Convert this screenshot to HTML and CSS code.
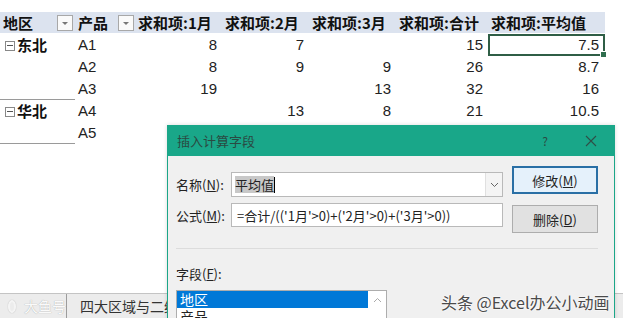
FILE: index.html
```html
<!doctype html>
<html>
<head>
<meta charset="utf-8">
<link rel="stylesheet" href="styles.css">
</head>
<body>
<div class="sheet">
	<div class="pivot">
		<div class="h first">地区<span class="filt"></span></div>
		<div class="h first">产品<span class="filt"></span></div>
		<div class="h">求和项:1月</div>
		<div class="h">求和项:2月</div>
		<div class="h">求和项:3月</div>
		<div class="h">求和项:合计</div>
		<div class="h">求和项:平均值</div>

		<div class="region r3"><span class="tog"></span>东北</div>
		<div class="p">A1</div><div class="n">8</div><div class="n">7</div><div class="n"></div><div class="n">15</div><div class="n cur">7.5<span class="handle"></span></div>
		<div class="p">A2</div><div class="n">8</div><div class="n">9</div><div class="n">9</div><div class="n">26</div><div class="n">8.7</div>
		<div class="p">A3</div><div class="n">19</div><div class="n"></div><div class="n">13</div><div class="n">32</div><div class="n">16</div>

		<div class="region r2"><span class="tog"></span>华北</div>
		<div class="p">A4</div><div class="n"></div><div class="n">13</div><div class="n">8</div><div class="n">21</div><div class="n">10.5</div>
		<div class="p">A5</div><div class="n"></div><div class="n"></div><div class="n"></div><div class="n"></div><div class="n"></div>
	</div>

	<div class="tabs">
		<div class="logo"><span class="ring"></span>大鱼号</div>
		<div class="tab">四大区域与二维</div>
	</div>
</div>

<div class="dlg">
	<div class="dlg-title">
		<span class="ttl">插入计算字段</span>
		<span class="help">?</span>
		<svg class="close" width="12" height="12" viewBox="0 0 12 12"><path d="M1 1L11 11M11 1L1 11" stroke="#2f4f47" stroke-width="1.1" fill="none"/></svg>
	</div>
	<div class="dlg-body">
		<div class="top">
			<div class="fields">
				<div class="frow">
					<span class="lbl">名称(<u>N</u>):</span>
					<div class="box combo"><span class="selt">平均值</span><span class="caret"></span>
						<span class="drop"><svg width="9" height="6" viewBox="0 0 9 6"><path d="M1 1L4.5 4.5L8 1" stroke="#666" fill="none"/></svg></span>
					</div>
				</div>
				<div class="frow second">
					<span class="lbl">公式(<u>M</u>):</span>
					<div class="box formula">=合计/(('1月'&gt;0)+('2月'&gt;0)+('3月'&gt;0))</div>
				</div>
			</div>
			<div class="btns">
				<div class="btn def">修改(<u>M</u>)</div>
				<div class="btn">删除(<u>D</u>)</div>
			</div>
		</div>
		<div class="sep"></div>
		<div class="lbl2">字段(<u>F</u>):</div>
		<div class="list">
			<div class="items">
				<div class="item on">地区</div>
				<div class="item">产品</div>
			</div>
			<div class="sbar"><svg width="9" height="6" viewBox="0 0 9 6"><path d="M1 5L4.5 1.5L8 5" stroke="#aaa" fill="none"/></svg></div>
		</div>
	</div>
</div>

<div class="mark">头条 @Excel办公小动画</div>
</body>
</html>
```

FILE: styles.css
```css
html,body{
	margin:0px;
	padding:0px;
	width:623px;
	height:318px;
	overflow:hidden;
	background:#fff;
}
body{
	position:relative;
	font-family:"Liberation Sans","Noto Sans CJK SC",sans-serif;
	color:#222;
}
.sheet{
	display:flex;
	flex-direction:column;
	height:318px;
}
.pivot{
	margin-top:12px;
	display:grid;
	grid-template-columns:75px 61px 87px 87px 87px 92px 116px;
	grid-template-rows:22px;
	grid-auto-rows:22px;
	width:605px;
	font-size:15px;
}
.h{
	background:#dce3ef;
	font-family:"Noto Sans CJK SC",sans-serif;
	font-weight:bold;
	font-size:15px;
	line-height:21px;
	height:21px;
	padding-left:2px;
	white-space:nowrap;
	color:#111;
}
.h.first{
	display:flex;
	justify-content:space-between;
	align-items:center;
	padding-left:3px;
	padding-right:2px;
}
.filt{
	width:14px;
	height:14px;
	border:1px solid #a8a8a8;
	background:#fafafa;
	position:relative;
}
.filt:after{
	content:"";
	position:absolute;
	left:4px;
	top:6px;
	border-left:3px solid transparent;
	border-right:3px solid transparent;
	border-top:3px solid #777;
}
.region{
	font-family:"Noto Sans CJK SC",sans-serif;
	font-weight:bold;
	font-size:15px;
	line-height:22px;
	padding-left:5px;
	display:flex;
	align-items:flex-start;
	border-bottom:1px solid #9a9a9a;
	box-sizing:border-box;
	color:#111;
}
.r3{grid-row:span 3;}
.r2{grid-row:span 2;}
.tog{
	width:8px;
	height:8px;
	border:1px solid #888;
	margin:7px 2px 0 0;
	position:relative;
	flex:none;
}
.tog:after{
	content:"";
	position:absolute;
	left:1px;
	right:1px;
	top:3px;
	height:1px;
	background:#555;
}
.p{
	padding-left:3px;
	line-height:22px;
}
.n{
	text-align:right;
	padding-right:6px;
	line-height:22px;
	position:relative;
}
.cur{
	border:2px solid #2f5e46;
	line-height:18px;
	padding-right:4px;
	margin-left:-1px;
}
.handle{
	position:absolute;
	right:-4px;
	bottom:-4px;
	width:5px;
	height:5px;
	background:#2f6e4e;
	border:1px solid #fff;
}
.tabs{
	margin-top:auto;
	height:24px;
	background:#ececec;
	border-top:1px solid #c4c4c4;
	display:flex;
	align-items:center;
}
.logo{
	width:58px;
	padding-left:8px;
	border-right:1px solid #9c9c9c;
	height:24px;
	line-height:24px;
	color:#fafafa;
	font-family:"Noto Sans CJK SC",sans-serif;
	font-size:14px;
	text-shadow:0 0 1px #999;
	display:flex;
	align-items:center;
	white-space:nowrap;
}
.ring{
	width:9px;
	height:9px;
	border:2px solid #f4f4f4;
	border-radius:50%;
	margin-right:8px;
	box-shadow:0 0 1px #999;
}
.tab{
	padding-left:13px;
	font-family:"Noto Sans CJK SC",sans-serif;
	font-size:14px;
	color:#333;
	white-space:nowrap;
}

/* dialog */
.dlg{
	position:absolute;
	left:167px;
	top:125px;
	width:446px;
	height:220px;
	background:#f0f0f0;
	border:1px solid #1ba688;
	border-top:none;
	font-family:"Noto Sans CJK SC",sans-serif;
	font-size:13px;
	color:#222;
	box-shadow:0 0 4px rgba(0,0,0,0.15);
}
.dlg-title{
	height:31px;
	background:#19a789;
	display:flex;
	align-items:center;
	padding-left:9px;
	color:#2a4a42;
}
.ttl{flex:1;}
.help{
	font-size:12px;
	margin-right:37px;
}
.close{margin-right:17px;}
.dlg-body{
	padding:10px 16px 0 8px;
}
.top{
	display:flex;
	justify-content:space-between;
}
.fields{
	padding-top:6px;
}
.frow{
	display:flex;
	align-items:center;
}
.frow.second{margin-top:6px;}
.lbl{width:55px;white-space:nowrap;}
.box{
	width:270px;
	height:23px;
	border:1px solid #b9b9b9;
	background:#fff;
	display:flex;
	align-items:center;
}
.combo{position:relative;}
.selt{
	background:#c8c8c8;
	margin-left:3px;
	line-height:17px;
}
.caret{
	width:1px;
	height:16px;
	background:#000;
}
.drop{
	position:absolute;
	right:0;
	top:0;
	bottom:0;
	width:16px;
	border-left:1px solid #e0e0e0;
	background:#f4f4f4;
	display:flex;
	align-items:center;
	justify-content:center;
}
.formula{
	height:24px;
	padding-left:5px;
	box-sizing:border-box;
	width:272px;
	letter-spacing:0;
}
.btns{
	display:flex;
	flex-direction:column;
	gap:11px;
}
.btn{
	width:84px;
	height:26px;
	border:1px solid #adadad;
	background:#e1e1e1;
	display:flex;
	align-items:center;
	justify-content:center;
}
.btn.def{
	width:82px;
	height:24px;
	border:2px solid #2a6fa5;
	background:#e5f1fb;
}
.sep{
	height:1px;
	background:#dcdcdc;
	margin:15px 0 0 0;
}
.lbl2{
	margin-top:16px;
	line-height:18px;
}
.list{
	margin-top:7px;
	width:209px;
	height:60px;
	border:1px solid #adadad;
	background:#fff;
	display:flex;
}
.items{flex:1;}
.item{
	height:17px;
	line-height:17px;
	padding-left:3px;
	font-size:14px;
}
.item.on{
	background:#0078d7;
	color:#fff;
}
.sbar{
	width:18px;
	display:flex;
	justify-content:center;
	padding-top:6px;
	box-sizing:border-box;
	align-items:flex-start;
}
.mark{
	position:absolute;
	left:441px;
	top:290px;
	font-family:"Noto Sans CJK SC",sans-serif;
	font-size:16px;
	color:#4a4a4a;
	text-shadow:0 0 2px #fff,0 0 2px #fff;
	white-space:nowrap;
}
```
